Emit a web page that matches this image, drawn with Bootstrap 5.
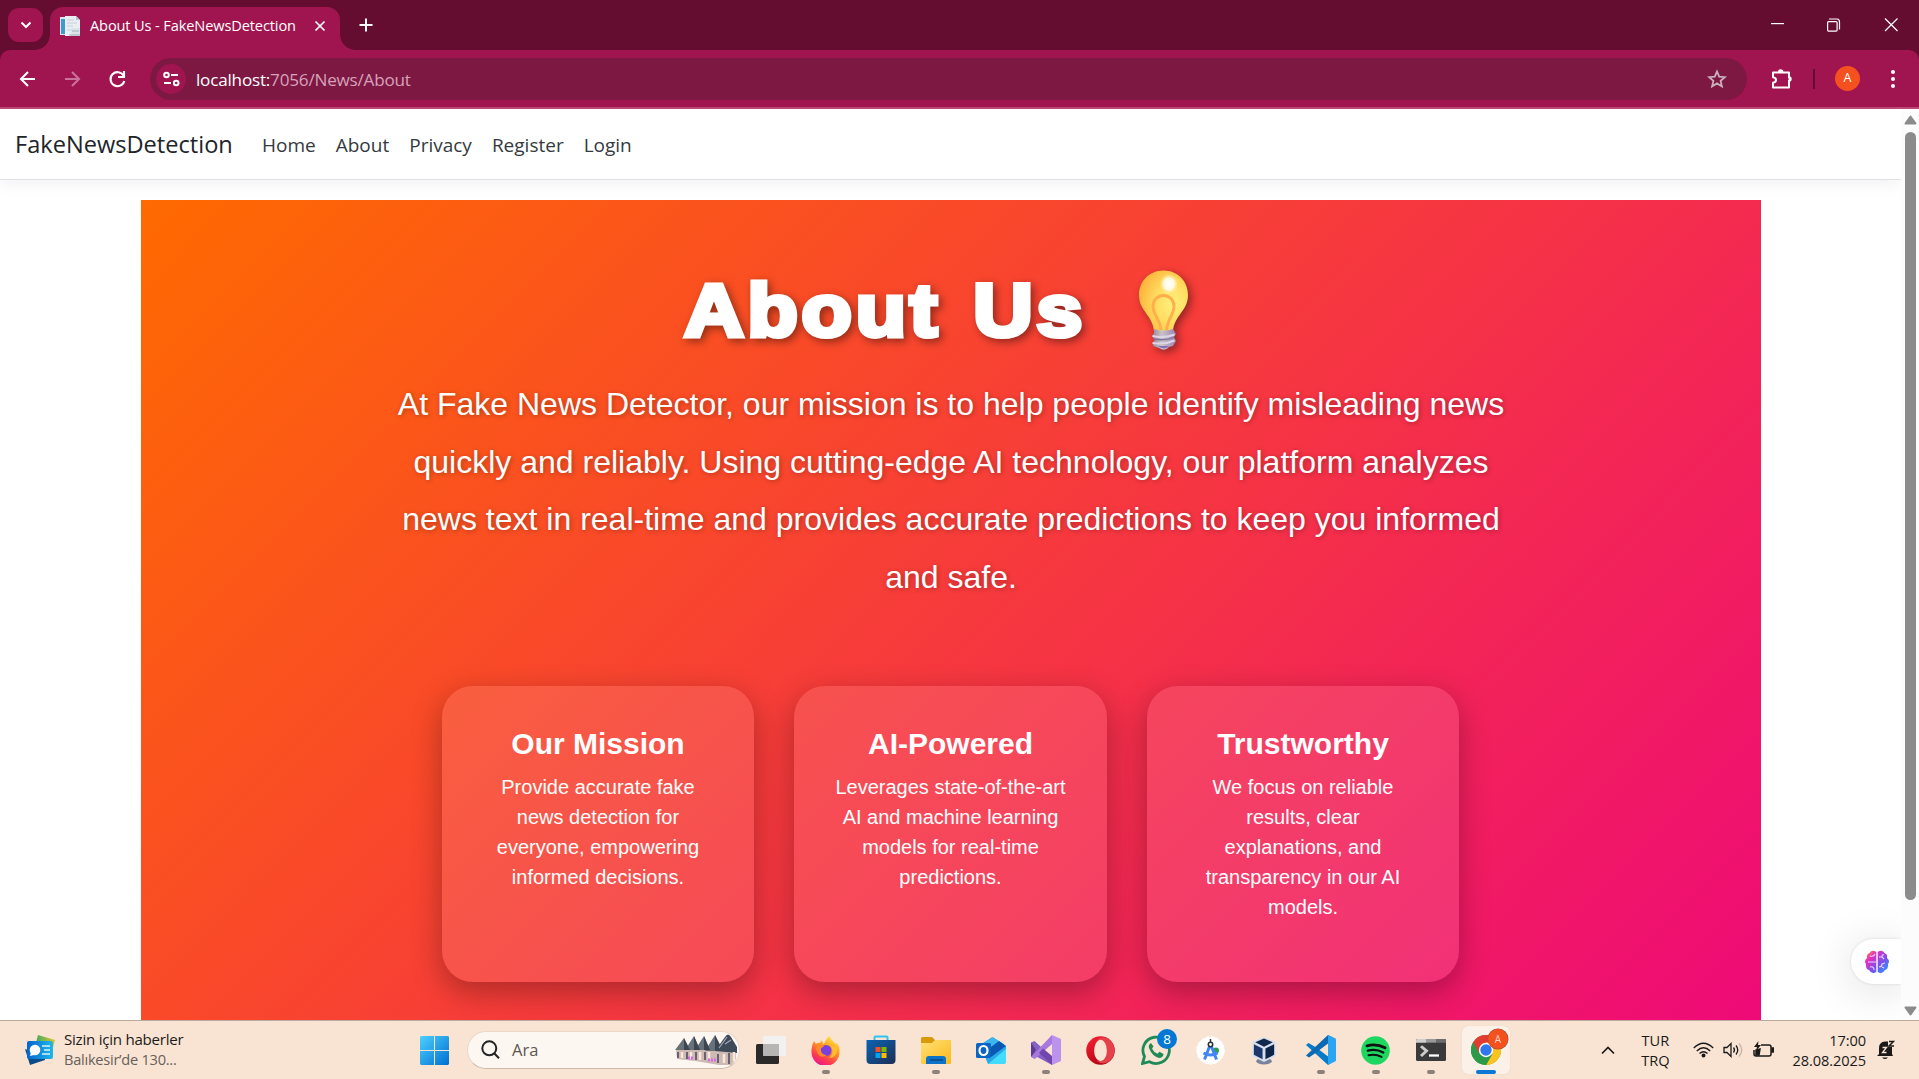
<!DOCTYPE html>
<html lang="tr">
<head>
<meta charset="utf-8">
<title>About Us - FakeNewsDetection</title>
<link href="https://cdn.jsdelivr.net/npm/bootstrap@5.3.0/dist/css/bootstrap.min.css" rel="stylesheet">
<style>
  html, body { height: 100%; }
  body { font-family: "Open Sans", "Noto Sans", sans-serif; width: 1919px; height: 1079px; overflow: hidden; background: #fff; }
  svg { display: block; flex: none; }
  .ui { white-space: nowrap; line-height: 1; }

  /* browser chrome */
  .tabstrip { height: 50px; background: #650d31; padding-left: 8px; }
  .tab-menu { width: 35px; height: 34px; border-radius: 11px; background: #a0154f; margin-top: 8px; }
  .tab-active { width: 290px; height: 43px; margin: 7px 0 0 7px; border-radius: 13px 13px 0 0; background: #a0154f; padding: 0 13px 6px 10px; position: relative; color: #fff; }
  .tab-active::before, .tab-active::after { content: ""; position: absolute; bottom: 0; width: 15px; height: 15px; }
  .tab-active::before { left: -15px; background: radial-gradient(circle at 0 0, transparent 14.5px, #a0154f 15px); }
  .tab-active::after { right: -15px; background: radial-gradient(circle at 100% 0, transparent 14.5px, #a0154f 15px); }
  .tab-title { font-size: 14.6px; margin-left: 10px; letter-spacing: -.13px; }
  .toolwrap { background: #650d31; }
  .toolbar { height: 59px; background: #a0154f; border-radius: 10px 10px 0 0; border-bottom: 2px solid #bd4775; }
  .omnibox { height: 42px; width: 1597px; border-radius: 21px; background: #7d1843; padding-left: 6px; }
  .site-info { width: 30px; height: 30px; border-radius: 50%; background: #a0154f; }
  .url { font-size: 17.1px; letter-spacing: -.2px; color: #d6a3b9; margin-left: 10px; padding-top: 2px; }
  .url b { color: #fff; font-weight: 400; }
  .avatar { width: 25px; height: 25px; border-radius: 50%; background: #f4511e; color: #fff; font-size: 12.5px; }

  /* page */
  .viewport { height: 911px; overflow: hidden; }
  .page-area { width: 1901px; position: relative; overflow: hidden; }
  .site-nav { height: 71px; border-bottom: 1px solid #dee2e6; box-shadow: 0 5px 15px rgba(0,0,0,.05); padding: 2px 0 0 15px; background: #fff; }
  .site-brand { font-size: 23.6px; color: #212529; width: 232px; }
  .navbar-nav .site-link { font-size: 19px; color: #343a40; margin: 0 2px; padding: 0 8px; }
  .hero { width: 1620px; height: 845px; margin: 20px 0 0 141px; padding-top: 64px; background: linear-gradient(135deg, #ff6a00, #ee0979); color: #fff; font-family: "Liberation Sans", Arial, sans-serif; text-align: center; }
  .hero-title { width: 538px; height: 96px; margin: 0 auto 16px; filter: drop-shadow(3px 3px 4px rgba(0,0,0,.42)); }
  .hero-word { width: 456px; text-align: left; font-size: 73.5px; line-height: 94px; font-weight: 700; -webkit-text-stroke: 5px #fff; letter-spacing: 3.4px; word-spacing: 5px; padding-left: 2px; white-space: nowrap; transform: scaleX(1.12); transform-origin: 0 0; flex: none; }
  .hero-lead { width: 1125px; margin: 0 auto 80px; font-size: 32px; line-height: 57.6px; text-shadow: 1px 1px 5px rgba(0,0,0,.3); }
  .feature { width: 312.5px; height: 296px; border-radius: 31px; padding: 40px; background: rgba(255,255,255,.11); box-shadow: 0 10px 31px rgba(0,0,0,.3); }
  .feature h3 { font-size: 30px; line-height: 36px; font-weight: 700; margin: 0 -10px 10px; }
  .feature p { font-size: 20px; line-height: 30px; margin: 0; }
  .features { gap: 40px; margin-left: -1px; }
  .side-widget { position: absolute; right: 0; top: 830px; width: 50px; height: 45px; border-radius: 23px 0 0 23px; background: #fff; box-shadow: 0 6px 45px rgba(0,0,0,.14), 0 0 3px rgba(0,0,0,.12); padding-left: 14px; }
  .scroll { width: 18px; background: #fcfcfc; padding: 6px 0 4px; }
  .thumb { width: 11px; height: 768px; border-radius: 6px; background: #8b8b8b; margin-top: 7px; }

  /* taskbar */
  .taskbar { height: 59px; background: #f9e4d3; border-top: 1px solid #bcab9f; color: #1b1a19; }
  .widgets { width: 420px; padding-left: 25px; gap: 9px; }
  .news-a { font-size: 15.1px; letter-spacing: -.25px; margin: -2px 0 5px; color: #1b1a19; }
  .news-b { font-size: 14.6px; letter-spacing: -.25px; color: #675f59; }
  .searchpill { width: 273px; height: 38px; border-radius: 19px; background: #fdf7f1; border: 1px solid #ead7c9; border-bottom-color: #cdb9ab; margin: 0 3px 0 18px; padding: 0 2px 0 13px; }
  .slot { width: 55px; height: 48px; position: relative; }
  .slot.run::after { content: ""; position: absolute; bottom: 0; left: 23.5px; width: 8px; height: 4px; border-radius: 2px; background: #8c8079; }
  .slot.on { width: 48px; margin-left: 4px; background: #fcf1e9; border-radius: 6px; box-shadow: 0 0 1px #d9c5b8; }
  .slot.on::after { content: ""; position: absolute; bottom: 0; left: 14px; width: 20px; height: 4px; border-radius: 2px; background: #0a78d4; }
  .count { position: absolute; top: 3px; right: 6px; width: 20px; height: 20px; border-radius: 50%; background: #0078d4; color: #fff; font-size: 13.5px; }
  .count.user { background: #f4511e; font-size: 10px; top: 3px; right: 2px; color: #ffd5c8; box-shadow: 0 0 0 .5px #a74e2e; }
  .tray { font-size: 14.6px; }
  .tray .ui { line-height: 20px; }
</style>
<script src="https://cdn.jsdelivr.net/npm/bootstrap@5.3.0/dist/js/bootstrap.bundle.min.js"></script>
</head>
<body class="d-flex flex-column">

<div class="tabstrip d-flex align-items-start">
  <div class="tab-menu d-flex align-items-center justify-content-center">
    <svg width="12" height="8" viewBox="0 0 12 8" fill="none" stroke="#fff" stroke-width="2"><path d="M1.5 1.5 6 6l4.500-4.500"/></svg>
  </div>
  <div class="tab-active d-flex align-items-center">
    <svg width="20" height="20" viewBox="0 0 20 20"><path d="M0 1h8v18H0z" fill="#d5e6ef"/><path d="M1 3h5v15H1z" fill="#3e9bcb"/><path d="M5 0h11l4 4v16H5z" fill="#e8eef2"/><path d="M16 0v4h4z" fill="#b4c2cc"/><path d="M7 4h7M7 7h10M7 10h6M7 14h5" stroke="#c5d0d8"/><path d="M11 12h9v8h-9z" fill="#dbe3e8"/><path d="M12 15h7M9 19h11" stroke="#9cb0bd"/></svg>
    <span class="tab-title ui">About Us - FakeNewsDetection</span>
    <svg class="ms-auto" width="14" height="14" viewBox="0 0 14 14" stroke="#fff" stroke-width="1.700"><path d="m2.500 2.500 9 9M11.500 2.500l-9 9"/></svg>
  </div>
  <svg style="margin:18px 0 0 19px" width="14" height="14" viewBox="0 0 14 14" stroke="#fff" stroke-width="2"><path d="M7 .5v13M.5 7h13"/></svg>
  <div class="ms-auto d-flex align-items-center" style="margin-top:17px">
    <svg width="148" height="16" viewBox="0 0 148 16" fill="none" stroke="#fff" stroke-width="1.200"><path d="M0 6.600h13"/><rect x="56.600" y="4.600" width="9.500" height="9.500" rx="1"/><path d="M58 2h8q2.500 0 2.500 3v7.500"/><path d="m114 1.500 12.500 12.500M126.500 1.500 114 14"/></svg>
  </div>
</div>

<div class="toolwrap"><div class="toolbar d-flex align-items-center">
  <svg width="150" height="24" viewBox="0 0 150 24" fill="none" stroke="#fff" stroke-width="2.100"><path d="M35 12H21.500M28 5l-7 7 7 7"/><path d="M65 12h13.500M72 5l7 7-7 7" stroke="#c9739a"/><path d="M123.500 8.500A7 7 0 1 0 124.300 14"/><path d="M124 4v6h-6" /></svg>
  <div class="omnibox d-flex align-items-center">
    <div class="site-info d-flex align-items-center justify-content-center">
      <svg width="17" height="16" viewBox="0 0 17 16" fill="none" stroke="#fff" stroke-width="2"><circle cx="3.500" cy="4" r="2.300"/><path d="M8 4h7M1 12h7"/><circle cx="13.200" cy="12" r="2.300"/></svg>
    </div>
    <span class="url ui"><b>localhost:</b>7056/News/About</span>
    <svg class="ms-auto" style="margin-right:20px" width="20" height="20" viewBox="0 0 20 20" fill="none" stroke="#c9b2bd" stroke-width="1.800"><path d="m10 2.500 2.200 5.200 5.700.5-4.300 3.700 1.300 5.500-4.900-3-4.900 3 1.300-5.500-4.300-3.700 5.700-.5z"/></svg>
  </div>
  <svg style="margin-left:24px" width="22" height="22" viewBox="0 0 22 22"><path d="M2 4.500h16v5.200h1v2.600h-1V19.500H2v-4.700c4-.5 4-5.100 0-5.600z" fill="none" stroke="#fff" stroke-width="2" stroke-linejoin="round"/><path d="M7 4a2.700 2.700 0 0 1 5.400 0zM18 8.300a2.700 2.700 0 0 1 0 5.400z" fill="#fff"/></svg>
  <div style="width:2px;height:20px;background:#650d31;margin:0 20px 0 20px"></div>
  <div class="avatar d-flex align-items-center justify-content-center">A</div>
  <svg style="margin-left:30px" width="6" height="20" viewBox="0 0 6 20" fill="#fff"><circle cx="3" cy="3" r="2"/><circle cx="3" cy="10" r="2"/><circle cx="3" cy="17" r="2"/></svg>
</div></div>

<div class="viewport d-flex">
  <div class="page-area">
    <nav class="navbar navbar-expand site-nav justify-content-start align-items-center">
      <a class="navbar-brand site-brand ui m-0 p-0" href="#">FakeNewsDetection</a>
      <div class="navbar-nav">
        <a class="nav-link site-link ui" href="#" style="margin-left:7px">Home</a>
        <a class="nav-link site-link ui" href="#">About</a>
        <a class="nav-link site-link ui" href="#">Privacy</a>
        <a class="nav-link site-link ui" href="#">Register</a>
        <a class="nav-link site-link ui" href="#">Login</a>
      </div>
    </nav>
    <main class="hero">
      <h1 class="hero-title d-flex">
        <span class="hero-word">About Us</span>
        <svg style="margin-top:6px" width="51" height="81" viewBox="0 0 51 81">
          <defs>
            <radialGradient id="glass" cx=".68" cy=".55" r=".7"><stop offset="0" stop-color="#fff07e"/><stop offset=".5" stop-color="#ffdc5f"/><stop offset="1" stop-color="#fdb23b"/></radialGradient>
            <linearGradient id="cap"><stop offset="0" stop-color="#8f8697"/><stop offset=".4" stop-color="#cbc1c8"/><stop offset="1" stop-color="#9686b2"/></linearGradient>
            <radialGradient id="shine"><stop offset="0" stop-color="#fff"/><stop offset=".55" stop-color="#fffbe0"/><stop offset="1" stop-color="#ffe98a" stop-opacity="0"/></radialGradient>
          </defs>
          <path d="M25.500.5C11 .5 1 11.500 1 25c0 16 13.500 20 15 36h19c1.500-16 15-20 15-36C50 11.500 40 .5 25.500.5z" fill="url(#glass)"/>
          <path d="M23 60c-1-11-8-15-8-24a10.500 10.500 0 0 1 21 0c0 9-6.500 13-7.500 24" fill="none" stroke="#ffae4b" stroke-width="2.800"/>
          <ellipse cx="31" cy="14" rx="9.500" ry="10.500" fill="url(#shine)"/>
          <path d="M16 59q9.500 3 19 0l3 5-2 3 2 4-3 5-4 1q-4 5-10 1l-6-2v-4l2-2-3-4 2-3z" fill="url(#cap)"/>
          <path d="M14.500 66q12 2.500 22-1.500M14.500 73q12 2 22-2.500" fill="none" stroke="#ded6e6" stroke-width="2"/>
          <path d="M15.500 69q11 2 20-1.500" fill="none" stroke="#7c719a" stroke-width="1.300"/>
          <path d="M20 76h11q-5 4.500-11 0z" fill="#8370bb"/>
        </svg>
      </h1>
      <p class="hero-lead">At Fake News Detector, our mission is to help people identify misleading news quickly and reliably. Using cutting-edge AI technology, our platform analyzes news text in real-time and provides accurate predictions to keep you informed and safe.</p>
      <div class="features d-flex justify-content-center">
        <section class="feature"><h3>Our Mission</h3><p>Provide accurate fake news detection for everyone, empowering informed decisions.</p></section>
        <section class="feature"><h3>AI-Powered</h3><p>Leverages state-of-the-art AI and machine learning models for real-time predictions.</p></section>
        <section class="feature"><h3>Trustworthy</h3><p>We focus on reliable results, clear explanations, and transparency in our AI models.</p></section>
      </div>
    </main>
    <div class="side-widget d-flex align-items-center">
      <svg width="24" height="24" viewBox="0 0 24 24">
        <defs><linearGradient id="brain" x1="0" y1="0" x2="1" y2="1"><stop offset="0" stop-color="#ff9c2a"/><stop offset=".28" stop-color="#e32fc0"/><stop offset=".6" stop-color="#7a50ee"/><stop offset="1" stop-color="#1aa7ff"/></linearGradient></defs>
        <path d="M11.300 2Q7-1 4.500 3 1 4 2 8-1.500 11 1 14q-.5 5 3 6 3 5 7.300 2zM12.700 2Q17-1 19.500 3 23 4 22 8q3.500 3 1 6 .5 5-3 6-3 5-7.300 2z" fill="url(#brain)"/>
        <path d="M3 12h8M5 6q4 1 5-2M5 17q4-1 4 3M14 7h3q0-3 2-2M14 17q3 0 3-3l3-1M17 17l2 1M17 7l2 2" fill="none" stroke="#e9d5ff" stroke-width="1.100"/>
      </svg>
    </div>
  </div>
  <div class="scroll d-flex flex-column align-items-center">
    <svg width="13" height="10" viewBox="0 0 13 10"><path d="M6.500 1.500 11.500 8.500h-10z" fill="#8b8b8b" stroke="#8b8b8b" stroke-width="2" stroke-linejoin="round"/></svg>
    <div class="thumb"></div>
    <svg class="mt-auto" width="13" height="10" viewBox="0 0 13 10"><path d="M6.500 8.500 11.500 1.500h-10z" fill="#8b8b8b" stroke="#8b8b8b" stroke-width="2" stroke-linejoin="round"/></svg>
  </div>
</div>

<footer class="taskbar d-flex align-items-center">
  <div class="widgets d-flex align-items-center">
    <svg width="30" height="30" viewBox="0 0 30 30">
      <defs><linearGradient id="nw"><stop offset="0" stop-color="#0464cf"/><stop offset="1" stop-color="#1fb8e8"/></linearGradient><linearGradient id="ng"><stop offset="0" stop-color="#35a86a"/><stop offset="1" stop-color="#d9c62c"/></linearGradient></defs>
      <path d="m13 0 17 5-4 15L9 15z" fill="url(#ng)"/><path d="m0 14 20 8v3L5 30z" fill="#0c4c86"/><rect x="2" y="6" width="26" height="18" rx="2" fill="url(#nw)"/><circle cx="10" cy="15" r="5.300" fill="#fff"/><path d="m5 21 1-4 3 3z" fill="#fff"/><path d="M17 11h8M19 15h6M17 19h8" stroke="#d6f2fb" stroke-width="1.500"/>
    </svg>
    <div><div class="ui news-a">Sizin için haberler</div><div class="ui news-b">Balıkesir’de 130...</div></div>
  </div>
  <svg width="29" height="29" viewBox="0 0 29 29"><defs><linearGradient id="win" gradientUnits="userSpaceOnUse" x1="0" y1="0" x2="29" y2="29"><stop offset="0" stop-color="#4cd0ff"/><stop offset="1" stop-color="#006fd1"/></linearGradient></defs><path d="M1 0h13v14H0V1zM15 0h13l1 1v13H15zM0 15h14v14H1l-1-1zM15 15h14v13l-1 1H15z" fill="url(#win)"/></svg>
  <div class="searchpill d-flex align-items-center">
    <svg width="20" height="20" viewBox="0 0 20 20" fill="none" stroke="#242424" stroke-width="2"><circle cx="8.300" cy="8.300" r="7"/><path d="m13.200 13.200 4.800 5"/></svg>
    <span class="ui" style="font-size:16.500px;margin-left:11px;padding-top:1px;color:#5c5751">Ara</span>
    <svg class="ms-auto" width="62" height="32" viewBox="0 0 62 32">
      <path d="M1 15h60v10l-5 6H44L20 27 2 25z" fill="#cdbab2"/>
      <path d="m0 16 9-12 6 12zM10 16l9-14 6 14zM20 16l9-14 6 14zM30 17l10-16 8 16z" fill="#68707a"/><path d="M9 4l6 12H9zM19 2l6 14h-6zM29 2l6 14h-6zM40 1l8 16h-8z" fill="#3d4551"/><path d="M40 17 50 3q3-5 6 0l6 10v6z" fill="#3f4a59"/>
      <path d="M44 14 52 3M50 10l6-4" stroke="#9faab5" stroke-width="1.200"/>
      <path d="M3 18v6M12 18v7M21 18v8M30 18v8M43 20v9M54 19v11" stroke="#6a6274" stroke-width="2"/>
      <path d="M7 18v6M16 18v7M25 18v8M34 18v8M49 20v9M59 18v9" stroke="#fbe6d8" stroke-width="2.500"/>
      <path d="M13 24h6M33 26h8" stroke="#d66be4" stroke-width="3" stroke-dasharray="2 1"/>
    </svg>
  </div>
  <div class="slot d-flex align-items-center justify-content-center"><svg width="30" height="29" viewBox="0 0 30 29"><rect x="0" y="8" width="23" height="20" rx="1.500" fill="#2b2a29"/><rect x="7" y="0" width="23" height="20" rx="1.500" fill="#f1f1f1"/><path d="M7 8h16v12H8.500L7 18.500z" fill="#b6b5b4"/></svg></div>
  <div class="slot run d-flex align-items-center justify-content-center"><svg width="29" height="29" viewBox="0 0 29 29">
    <defs><linearGradient id="fx" x1=".8" y1="0" x2=".3" y2="1"><stop offset="0" stop-color="#fff04a"/><stop offset=".4" stop-color="#ff9a1f"/><stop offset=".75" stop-color="#ff3d4e"/><stop offset="1" stop-color="#ec1294"/></linearGradient></defs>
    <path d="M3 5l2 3q2-2 4-1l2-3 1 4q2-1 3-4 1-3 4-4 0 3 4 6l2 2 1-1q3 4 2.500 9A14 14 0 0 1 .5 16Q0 10 3 5z" fill="url(#fx)"/><circle cx="15" cy="14.500" r="5.500" fill="#7a3fe0"/><path d="M5 11q5-4 8 0-4 0-3 4 1 4 6 4-6 4-9-1-2-4-2-7z" fill="#ff8a2a"/><path d="M18 8q4 3 3.500 8-.5 4-4 6 8 0 9-9z" fill="#ffbf30"/></svg></div>
  <div class="slot d-flex align-items-center justify-content-center"><svg width="30" height="30" viewBox="0 0 30 30"><defs><linearGradient id="st" x1="0" y1="0" x2="1" y2="1"><stop offset="0" stop-color="#0b64b4"/><stop offset="1" stop-color="#1c2d55"/></linearGradient></defs><path d="M8.500 7V2.500q0-1 1-1h11q1 0 1 1V7" fill="none" stroke="#2fc3f3" stroke-width="2"/><path d="M.5 5h29v20q0 4-4 4h-21q-4 0-4-4z" fill="url(#st)"/><path d="M9.500 12h5v5h-5z" fill="#f25022"/><path d="M15.500 12h5v5h-5z" fill="#7fba00"/><path d="M9.500 18h5v5h-5z" fill="#00a4ef"/><path d="M15.500 18h5v5h-5z" fill="#ffb900"/></svg></div>
  <div class="slot run d-flex align-items-center justify-content-center"><svg width="30" height="27" viewBox="0 0 30 27"><defs><linearGradient id="fo" x1="0" y1="0" x2="1" y2="1"><stop offset="0" stop-color="#ffe17a"/><stop offset="1" stop-color="#fbb918"/></linearGradient></defs><path d="M0 1.500Q0 0 1.500 0H11l3 3v6H0z" fill="#d99a0b"/><path d="M0 6h11l3-3h15q1 0 1 1v22q0 1-1 1H1q-1 0-1-1z" fill="url(#fo)"/><path d="M5 27v-5q0-3 3-3h14q3 0 3 3v5z" fill="#0d73c7"/><path d="M9 23h13" stroke="#0a4a86" stroke-width="1.500"/></svg></div>
  <div class="slot d-flex align-items-center justify-content-center"><svg width="30" height="27" viewBox="0 0 30 27"><path d="M4 8 15.500.5q1-.7 2 0L30 9v15q0 3-3 3H12z" fill="#28a8ea"/><path d="m8 6 9-5.500L28 7 15 16z" fill="#3bb6ee"/><path d="m15 10 8-6 7 5L15 20z" fill="#0a58b0"/><path d="M12 27 30 12v12q0 3-3 3z" fill="#44dcfb"/><rect x="0" y="6" width="15" height="15" rx="1.500" fill="#0b66c3"/><ellipse cx="7.500" cy="13.500" rx="4" ry="4.500" fill="none" stroke="#fff" stroke-width="2.200"/></svg></div>
  <div class="slot run d-flex align-items-center justify-content-center"><svg width="30" height="30" viewBox="0 0 30 30"><path d="M0 7.500 3.500 6 20 21l1 9L3.500 20.500 0 22z" fill="#8661c5"/><path d="M0 7.500V22l5-7z" fill="#5c3c92"/><path d="M0 22 21 0v9L5 23l-1.500 1z" fill="#a878df"/><path d="m21 0 9 4v22l-9 4z" fill="#bb92ec"/><path d="m8 18 5 4.500 8 7.500v-9l-9-7.500z" fill="#7147ad"/></svg></div>
  <div class="slot d-flex align-items-center justify-content-center"><svg width="29" height="29" viewBox="0 0 29 29"><defs><linearGradient id="op" x1="0" y1="0" x2=".7" y2="1"><stop offset="0" stop-color="#ff2038"/><stop offset="1" stop-color="#a5020d"/></linearGradient></defs><circle cx="14.500" cy="14.500" r="14.300" fill="url(#op)"/><path d="M10 4.500Q18-2 25 5q4 5 3.500 10-.5 6-5 10-6 5-13.500-.5 5 1.500 8-2 5-9 0-16-3-3.500-8-2z" fill="#e6404a"/><ellipse cx="14.500" cy="14.500" rx="6.400" ry="10.700" fill="#f9e4d3"/></svg></div>
  <div class="slot d-flex align-items-center justify-content-center"><svg width="30" height="30" viewBox="0 0 30 30"><path d="M1.500 28.500 3.500 21.500A13.200 13.200 0 1 1 8.500 26.700z" fill="none" stroke="#1f8a58" stroke-width="2.800"/><path d="M10 8q-3 2-2 5 3 8 10 10 4 0 4.500-4l-4-2.300-2 2q-4-1.500-5.500-5.200l1.500-2z" fill="#1f8a58"/></svg><span class="count d-flex align-items-center justify-content-center">8</span></div>
  <div class="slot d-flex align-items-center justify-content-center"><svg width="29" height="29" viewBox="0 0 29 29"><circle cx="14.500" cy="14.500" r="13.800" fill="#fff"/><circle cx="14.500" cy="14.500" r="13.800" fill="none" stroke="#fff" stroke-dasharray="3 2"/><circle cx="20" cy="14.500" r="3" fill="#2f9e55"/><path d="M14.500 8 8.500 23.500M14.500 8l6 15.500M7.500 17q7 4 14 0" fill="none" stroke="#4285f4" stroke-width="3"/><path d="M14.500 3v5" stroke="#333" stroke-width="1.500"/><circle cx="14.500" cy="8.500" r="2.200" fill="#fff" stroke="#263238" stroke-width="1.500"/></svg></div>
  <div class="slot d-flex align-items-center justify-content-center"><svg style="margin-right:3px" width="26" height="29" viewBox="0 0 26 30"><ellipse cx="13" cy="26" rx="8" ry="3.500" fill="#78839b"/><path d="M13 1 25 6v15l-12 6L1 21V6z" fill="#d8dfec"/><path d="m13 2.500 9 4-9 4.500-9-4.500z" fill="#12284f"/><path d="m2.500 8.500 9 4.500v11l-9-4.500z" fill="#1b376c"/><path d="m23.500 8.500-9 4.500v11l9-4.500z" fill="#0e2348"/></svg></div>
  <div class="slot run d-flex align-items-center justify-content-center"><svg width="30" height="30" viewBox="0 0 30 30"><path d="M0 10 2.500 8 30 24l-8 6z" fill="#087ac6"/><path d="M0 20.500 22 0l8 4L3 22.500z" fill="#0a6ab2"/><path d="M22 0l7 3.500q1 .5 1 1.500v20q0 1-1 1.500L22 30z" fill="#2aa5f1"/><path d="M22 8.500v13L13.500 15z" fill="#f9e4d3"/></svg></div>
  <div class="slot run d-flex align-items-center justify-content-center"><svg width="29" height="29" viewBox="0 0 29 29"><circle cx="14.500" cy="14.500" r="14.300" fill="#1ed760"/><g fill="none" stroke="#101010" stroke-linecap="round"><path d="M6 9.800q9.500-2.500 18 2" stroke-width="2.900"/><path d="M6.800 14.700q8-2.300 15.500 1.800" stroke-width="2.400"/><path d="M7.500 19.300q7-1.800 13 1.600" stroke-width="2"/></g></svg></div>
  <div class="slot run d-flex align-items-center justify-content-center"><svg width="30" height="22" viewBox="0 0 30 24" preserveAspectRatio="none"><rect width="30" height="24" rx="1.500" fill="#3a3a3a"/><path d="M0 1.500Q0 0 1.500 0H10v4H0z" fill="#cfcfcf"/><path d="M10 0h10v4H10z" fill="#999"/><path d="M20 0h8.500Q30 0 30 1.500V4H20z" fill="#6c6c6c"/><path d="m5 8 5.500 5L5 18.500" fill="none" stroke="#ccc" stroke-width="3"/><path d="M13 18h10" stroke="#fff" stroke-width="2.500"/></svg></div>
  <div class="slot on d-flex align-items-center justify-content-center"><svg width="30" height="30" viewBox="0 0 30 30"><circle cx="15" cy="15" r="15" fill="#34a04f"/><path d="M15 15 2 7.500A15 15 0 0 1 28 7.500z" fill="#e23c30"/><path d="M15 15V7.500h13A15 15 0 0 1 15 30l6.500-11.500z" fill="#fcc31e"/><path d="M2 7.500 8.500 18.800 15 15V7.500z" fill="#e23c30"/><path d="M2 7.500A15 15 0 0 0 15 30l6.500-11.200L8.500 18.800z" fill="#2c9a48"/><circle cx="15" cy="15" r="7.200" fill="#fff"/><circle cx="15" cy="15" r="5.700" fill="#2e78ec"/></svg><span class="count user d-flex align-items-center justify-content-center">A</span></div>
  <div class="tray ms-auto d-flex align-items-center">
    <svg width="14" height="9" viewBox="0 0 14 9" fill="none" stroke="#1b1a19" stroke-width="1.700"><path d="m1 7.500 6-6 6 6"/></svg>
    <div class="text-center" style="margin:0 23px 0 26px"><div class="ui">TUR</div><div class="ui">TRQ</div></div>
    <svg width="21" height="16" viewBox="0 0 21 16" fill="none" stroke="#1b1a19" stroke-width="1.400"><path d="M.8 6q9.700-9.500 19.400 0M3.800 9q6.700-6.500 13.400 0M6.500 11.500q4-3.500 8 0"/><circle cx="10.500" cy="13.500" r="1.300" fill="#1b1a19"/></svg>
    <svg style="margin-left:9px" width="21" height="18" viewBox="0 0 21 18" fill="none" stroke="#1b1a19" stroke-width="1.300"><path d="M1 6.500h3l4-4v13l-4-4H1z"/><path d="M10.500 6.500q2 2.500 0 5M13 4.500q3.500 4.500 0 9"/><path d="M16 2.500q5.500 6.500 0 13" stroke="#c5b4a7"/></svg>
    <svg style="margin-left:9px" width="21" height="18" viewBox="0 0 21 18" fill="none" stroke="#1b1a19" stroke-width="1.500"><path d="M8 4h8q2 0 2 2v7q0 2-2 2H3q-2 0-2-2V9"/><path d="M19 7h1.500v4H19z" fill="#1b1a19"/><path d="M3 14V9l4-1-1 6z" fill="#1b1a19"/><path d="M5.500 0 1 6h3L3 10l5-6H5z" fill="#1b1a19" stroke="none"/></svg>
    <div class="text-end" style="margin:0 11px 0 19px;letter-spacing:-.1px"><div class="ui">17:00</div><div class="ui">28.08.2025</div></div>
    <svg style="margin-right:24px" width="18" height="20" viewBox="0 0 18 20"><path d="M2 14V8Q2 2 8 1.500h3V7h4v7l1 2H0z" fill="#1b1a19"/><path d="M5 17.500h6q-3 3-6 0z" fill="#1b1a19"/><path d="M5.500 7.500h4l-4 5h4M12 1.500h4l-4 4.500h4" fill="none" stroke="#f9e4d3" stroke-width="1.300"/><path d="M12 1.500h4.500L12 6h5" fill="none" stroke="#1b1a19" stroke-width="1.500"/></svg>
  </div>
</footer>
</body>
</html>
